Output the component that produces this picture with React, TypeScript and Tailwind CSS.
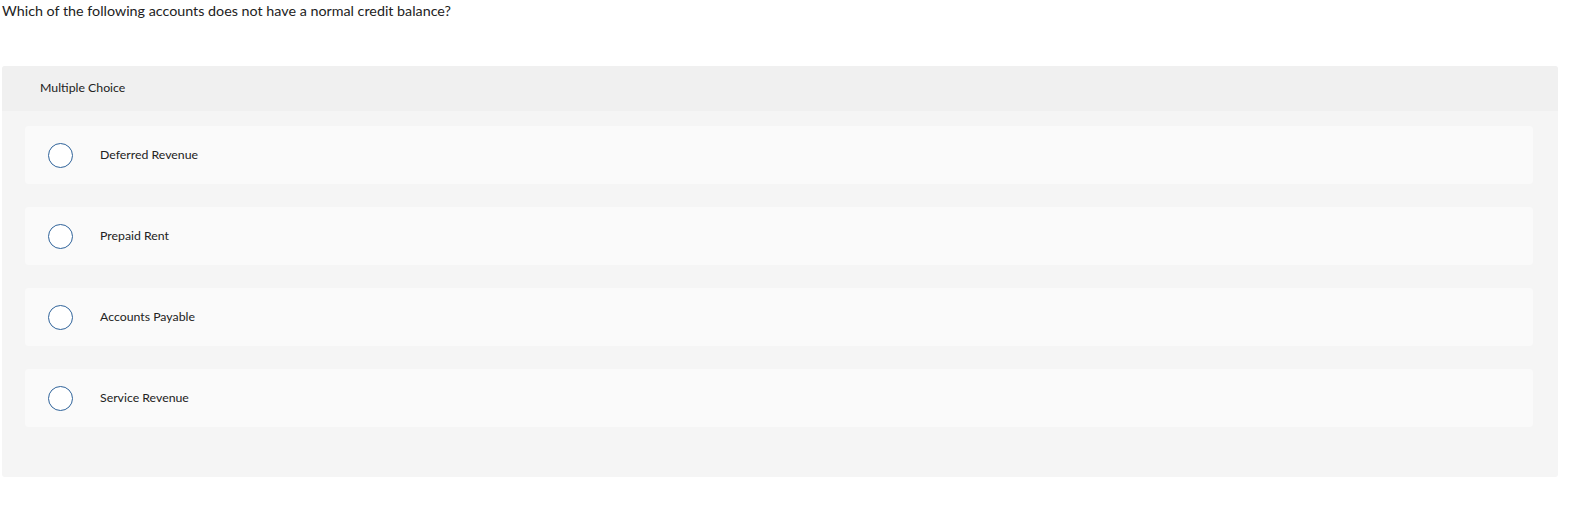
export default function App() {
  const options = ["Deferred Revenue", "Prepaid Rent", "Accounts Payable", "Service Revenue"];
  return (
    <div className="w-[1576px] h-[517px] bg-white px-[2px] text-[#222]" style={{ fontFamily: "Lato, 'Open Sans', sans-serif" }}>
      <p className="pt-[3px] text-[14.3px] leading-[16px]">Which of the following accounts does not have a normal credit balance?</p>
      <div className="mt-[47px] w-[1556px] rounded-[3px] bg-[#f5f5f5] pb-[50px]">
        <div className="flex h-[45px] items-center rounded-t-[3px] bg-[#f0f0f0] pl-[38px] text-[12.3px]">Multiple Choice</div>
        <div className="flex flex-col gap-[23px] pl-[23px] pr-[25px] pt-[15px]">
          {options.map((o) => (
            <div key={o} className="flex h-[58px] items-center rounded-[4px] bg-[#fafafa]">
              <div className="ml-[23px] h-[25px] w-[25px] rounded-full border-[1.5px] border-[#2f639a] bg-white" />
              <span className="ml-[27px] text-[12.3px]">{o}</span>
            </div>
          ))}
        </div>
      </div>
    </div>
  );
}
